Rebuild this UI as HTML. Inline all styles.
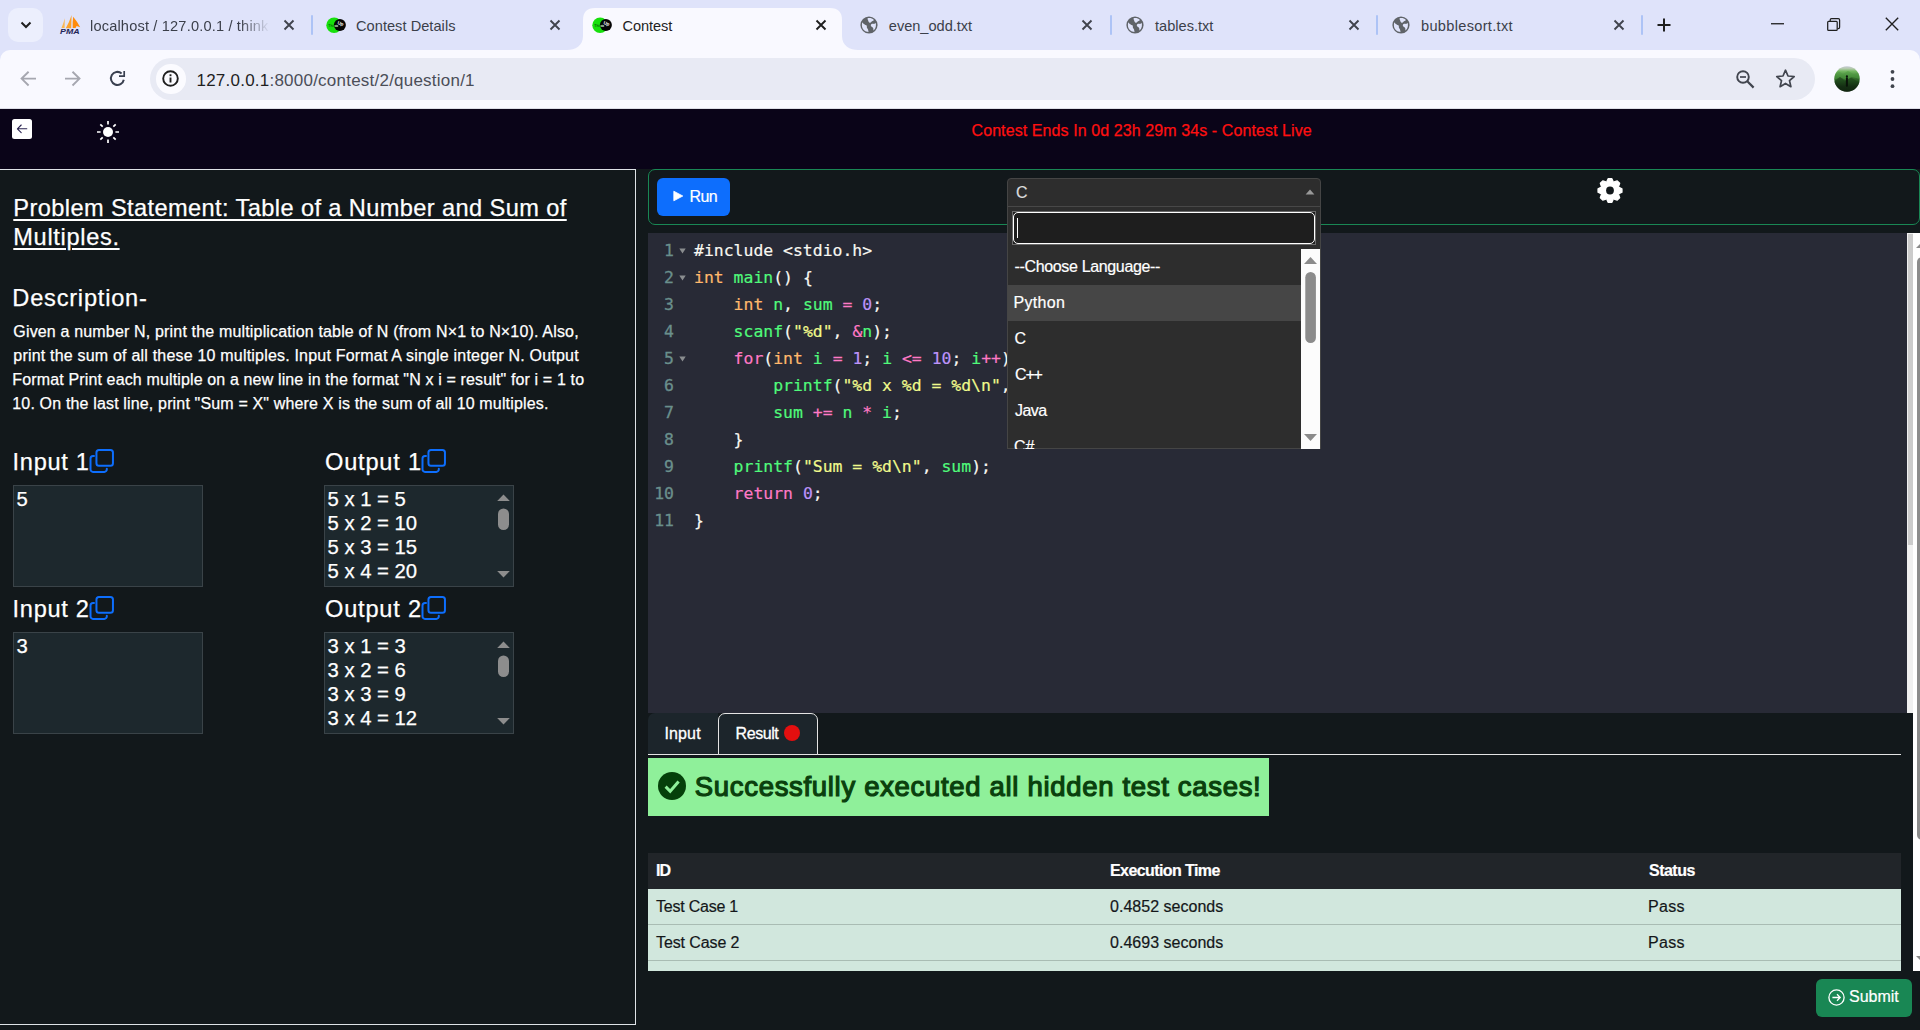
<!DOCTYPE html>
<html lang="en">
<head>
<meta charset="utf-8">
<title>Contest</title>
<style>
*{box-sizing:border-box;margin:0;padding:0}
html,body{width:1920px;height:1030px;overflow:hidden;background:#12181b}
body{position:relative;font-family:"Liberation Sans",sans-serif;color:#fff}
.abs{position:absolute}
.t{position:absolute;white-space:nowrap;line-height:1}
/* ---------- browser chrome ---------- */
#tabstrip{left:0;top:0;width:1920px;height:64px;background:#dfe3fa}
#toolbar{left:0;top:50px;width:1920px;height:58px;background:#f9f9ff;border-radius:10px 10px 0 0}
#tbline{left:0;top:108px;width:1920px;height:1px;background:#dcdde6}
.tabtxt{font-size:14.6px;color:#3b3f4a;top:19px}
.sep{width:2.4px;height:20px;top:14.6px;background:#adc3f6;border-radius:1.2px}
#urlbar{left:150px;top:58px;width:1665px;height:42px;border-radius:21px;background:#e8eaf4}
/* ---------- page ---------- */
#hdr{left:0;top:109px;width:1920px;height:60px;background:#0a0418}
#left{left:0;top:169px;width:636px;height:856px;background:#12181b;border:1px solid #dee2e6;border-left:0}
.nun{font-family:"Liberation Sans",sans-serif;-webkit-text-stroke:0.25px currentColor}
.h{font-size:23.6px;color:#fff}
.ta{background:#1d282d;border:1px solid #3a4348;width:190px;height:102px}
.tatxt{font-size:20.3px;color:#fff}
.p{font-size:16px;color:#fff}
.rob{font-family:"Liberation Sans",sans-serif;-webkit-text-stroke:0.2px currentColor}
.opt{font-size:16px;color:#fff}
.th{font-size:16px;font-weight:700;color:#fff}
.td{font-size:16px;color:#14171a}
.cd{font-family:"DejaVu Sans Mono","Liberation Mono",monospace;font-size:16.44px;line-height:21px;white-space:pre;color:#f8f8f2;-webkit-text-stroke:0.18px currentColor}
.ln{font-family:"DejaVu Sans Mono","Liberation Mono",monospace;font-size:16.44px;line-height:21px;color:#6a8f8c;-webkit-text-stroke:0.3px currentColor}
</style>
</head>
<body>
<!-- ================= BROWSER CHROME ================= -->
<div class="abs" id="tabstrip"></div>
<!-- tab search button -->
<div class="abs" style="left:8px;top:8px;width:35px;height:34px;border-radius:10px;background:#eceffd"></div>
<svg class="abs" style="left:19px;top:19px" width="14" height="12" viewBox="0 0 14 12"><path d="M2.5 3.5 L7 8 L11.5 3.5" fill="none" stroke="#1f1f1f" stroke-width="2"/></svg>
<!-- active tab shape -->
<svg class="abs" style="left:567px;top:8px" width="292" height="42" viewBox="0 0 292 42"><path d="M0 42 C8 42 16 38 16 28 V12 C16 4 20 0 28 0 H263 C271 0 275 4 275 12 V28 C275 38 283 42 291 42 Z" fill="#f9f9ff"/></svg>
<div class="abs" id="toolbar"></div>
<div class="abs" id="tbline"></div>
<div class="abs" id="urlbar"></div>
<!-- tab 1 : phpMyAdmin -->
<svg class="abs" style="left:59px;top:14px" width="23" height="22" viewBox="0 0 23 22">
<path d="M5.8 4.2 L5.6 13.9 L2.5 13.9 Q4.6 9 5.8 4.2 Z" fill="#fbb755"/><path d="M12.6 1 L12.2 14.2 L6.8 14.2 Q10.4 8 12.6 1 Z" fill="#fba22e"/><path d="M14.2 2.8 Q18 7.4 21.2 13.2 L17.6 12 L16.6 14.1 L13.7 13.9 Q13.4 8 14.2 2.8 Z" fill="#ff8c0c"/>
<text x="1.1" y="20.1" font-family="Liberation Sans, sans-serif" font-size="7.7" font-weight="700" font-style="italic" fill="#1f2558" textLength="19.6" lengthAdjust="spacingAndGlyphs">PMA</text></svg>
<div class="t tabtxt" id="tt1" style="left:90px;width:180px;overflow:hidden;-webkit-mask-image:linear-gradient(90deg,#000 150px,transparent 180px);mask-image:linear-gradient(90deg,#000 150px,transparent 180px);letter-spacing:0.17px">localhost / 127.0.0.1 / think</div>
<svg class="abs x" style="left:283px;top:19px" width="12" height="12" viewBox="0 0 12 12"><path d="M1.5 1.5 L10.5 10.5 M10.5 1.5 L1.5 10.5" stroke="#40434d" stroke-width="1.9" fill="none"/></svg>
<div class="abs sep" style="left:311px"></div>
<!-- tab 2 : Contest Details -->
<svg class="abs" style="left:326px;top:15px" width="21" height="20" viewBox="0 0 21 20"><circle cx="8.1" cy="10.2" r="7.8" fill="#17e00c"/><circle cx="13.9" cy="9.9" r="6" fill="#050505"/><text x="2.2" y="11.6" font-family="Liberation Sans, sans-serif" font-size="3.6" font-weight="700" fill="#0b6a08">Think</text><text x="11.6" y="9.6" font-family="Liberation Sans, sans-serif" font-size="4.6" font-weight="700" fill="#fff" transform="rotate(18 13 8)">Up</text><path d="M8.6 11 H12.2" stroke="#fff" stroke-width="1" fill="none"/></svg>
<div class="t tabtxt" id="tt2" style="left:356.0px;letter-spacing:0.036px">Contest Details</div>
<svg class="abs x" style="left:549px;top:19px" width="12" height="12" viewBox="0 0 12 12"><path d="M1.5 1.5 L10.5 10.5 M10.5 1.5 L1.5 10.5" stroke="#40434d" stroke-width="1.9" fill="none"/></svg>
<!-- tab 3 : Contest (active) -->
<svg class="abs" style="left:592px;top:15px" width="21" height="20" viewBox="0 0 21 20"><circle cx="8.1" cy="10.2" r="7.8" fill="#17e00c"/><circle cx="13.9" cy="9.9" r="6" fill="#050505"/><text x="2.2" y="11.6" font-family="Liberation Sans, sans-serif" font-size="3.6" font-weight="700" fill="#0b6a08">Think</text><text x="11.6" y="9.6" font-family="Liberation Sans, sans-serif" font-size="4.6" font-weight="700" fill="#fff" transform="rotate(18 13 8)">Up</text><path d="M8.6 11 H12.2" stroke="#fff" stroke-width="1" fill="none"/></svg>
<div class="t tabtxt" id="tt3" style="left:622.5px;color:#1f1f1f;letter-spacing:-0.083px">Contest</div>
<svg class="abs x" style="left:815px;top:19px" width="12" height="12" viewBox="0 0 12 12"><path d="M1.5 1.5 L10.5 10.5 M10.5 1.5 L1.5 10.5" stroke="#1f1f1f" stroke-width="1.9" fill="none"/></svg>
<!-- tab 4 -->
<svg class="abs globe" style="left:860px;top:16px" width="18" height="18" viewBox="0 0 18 18"><circle cx="9" cy="9" r="8.6" fill="#5f6368"/><path d="M2.2 6.2 C3.5 8.2 5.2 8.8 6.4 9.3 C7.4 10.4 6.3 11.6 7.4 12.6 C8.4 13.4 8.1 14.8 8.6 15.9 C5.2 15.9 1.9 13.2 1.9 9.2 C1.9 8.1 2 7.1 2.2 6.2 Z M7.6 2.2 C9.6 1.7 12.4 2.2 13.9 3.9 C13.2 5.1 11.7 4.8 11.2 6 C10.6 7.4 8.6 6.6 8.4 5.2 C8.3 4.2 7.3 3.4 7.6 2.2 Z M15.6 6.8 C16.4 9 16 12.4 13.6 14.4 C13.1 13.4 13.7 12.2 12.8 11.4 C11.8 10.6 10.6 10.4 10.8 9 C11 7.6 13.2 7.4 14 8 C14.7 8 15.1 7.3 15.6 6.8 Z" fill="#dfe3fa"/></svg>
<div class="t tabtxt" id="tt4" style="left:888.8px;letter-spacing:-0.023px">even_odd.txt</div>
<svg class="abs x" style="left:1081px;top:19px" width="12" height="12" viewBox="0 0 12 12"><path d="M1.5 1.5 L10.5 10.5 M10.5 1.5 L1.5 10.5" stroke="#40434d" stroke-width="1.9" fill="none"/></svg>
<div class="abs sep" style="left:1110px"></div>
<!-- tab 5 -->
<svg class="abs globe" style="left:1126px;top:16px" width="18" height="18" viewBox="0 0 18 18"><circle cx="9" cy="9" r="8.6" fill="#5f6368"/><path d="M2.2 6.2 C3.5 8.2 5.2 8.8 6.4 9.3 C7.4 10.4 6.3 11.6 7.4 12.6 C8.4 13.4 8.1 14.8 8.6 15.9 C5.2 15.9 1.9 13.2 1.9 9.2 C1.9 8.1 2 7.1 2.2 6.2 Z M7.6 2.2 C9.6 1.7 12.4 2.2 13.9 3.9 C13.2 5.1 11.7 4.8 11.2 6 C10.6 7.4 8.6 6.6 8.4 5.2 C8.3 4.2 7.3 3.4 7.6 2.2 Z M15.6 6.8 C16.4 9 16 12.4 13.6 14.4 C13.1 13.4 13.7 12.2 12.8 11.4 C11.8 10.6 10.6 10.4 10.8 9 C11 7.6 13.2 7.4 14 8 C14.7 8 15.1 7.3 15.6 6.8 Z" fill="#dfe3fa"/></svg>
<div class="t tabtxt" id="tt5" style="left:1155.0px;letter-spacing:0.000px">tables.txt</div>
<svg class="abs x" style="left:1348px;top:19px" width="12" height="12" viewBox="0 0 12 12"><path d="M1.5 1.5 L10.5 10.5 M10.5 1.5 L1.5 10.5" stroke="#40434d" stroke-width="1.9" fill="none"/></svg>
<div class="abs sep" style="left:1376px"></div>
<!-- tab 6 -->
<svg class="abs globe" style="left:1392px;top:16px" width="18" height="18" viewBox="0 0 18 18"><circle cx="9" cy="9" r="8.6" fill="#5f6368"/><path d="M2.2 6.2 C3.5 8.2 5.2 8.8 6.4 9.3 C7.4 10.4 6.3 11.6 7.4 12.6 C8.4 13.4 8.1 14.8 8.6 15.9 C5.2 15.9 1.9 13.2 1.9 9.2 C1.9 8.1 2 7.1 2.2 6.2 Z M7.6 2.2 C9.6 1.7 12.4 2.2 13.9 3.9 C13.2 5.1 11.7 4.8 11.2 6 C10.6 7.4 8.6 6.6 8.4 5.2 C8.3 4.2 7.3 3.4 7.6 2.2 Z M15.6 6.8 C16.4 9 16 12.4 13.6 14.4 C13.1 13.4 13.7 12.2 12.8 11.4 C11.8 10.6 10.6 10.4 10.8 9 C11 7.6 13.2 7.4 14 8 C14.7 8 15.1 7.3 15.6 6.8 Z" fill="#dfe3fa"/></svg>
<div class="t tabtxt" id="tt6" style="left:1421.0px;letter-spacing:0.308px">bubblesort.txt</div>
<svg class="abs x" style="left:1613px;top:19px" width="12" height="12" viewBox="0 0 12 12"><path d="M1.5 1.5 L10.5 10.5 M10.5 1.5 L1.5 10.5" stroke="#40434d" stroke-width="1.9" fill="none"/></svg>
<div class="abs sep" style="left:1641px"></div>
<!-- new tab + -->
<svg class="abs" style="left:1657px;top:18px" width="14" height="14" viewBox="0 0 14 14"><path d="M7 0.5 V13.5 M0.5 7 H13.5" stroke="#1f1f1f" stroke-width="2" fill="none"/></svg>
<!-- window controls -->
<svg class="abs" style="left:1771px;top:22.6px" width="13" height="2" viewBox="0 0 13 2"><rect width="13" height="1.3" y="0.1" fill="#1f1f1f"/></svg>
<svg class="abs" style="left:1826px;top:17px" width="16" height="16" viewBox="0 0 16 16"><rect x="1.7" y="4.3" width="9.5" height="9.1" rx="0.9" fill="none" stroke="#1f1f1f" stroke-width="1.25"/><path d="M4.2 4 V3 C4.2 2.2 4.7 1.7 5.5 1.7 H12.3 C13.1 1.7 13.6 2.2 13.6 3 V10.3 C13.6 11.1 13.1 11.6 12.3 11.6 H11.6" fill="none" stroke="#1f1f1f" stroke-width="1.25"/></svg>
<svg class="abs" style="left:1884.5px;top:17.1px" width="14" height="14" viewBox="0 0 14 14"><path d="M0.8 0.8 L13.2 13.2 M13.2 0.8 L0.8 13.2" stroke="#1f1f1f" stroke-width="1.35" fill="none"/></svg>
<!-- toolbar: nav buttons -->
<svg class="abs" style="left:18.7px;top:69.8px" width="19" height="18" viewBox="0 0 19 18"><path d="M9.6 1.7 L2.6 8.6 L9.6 15.5 M2.9 8.6 H17" stroke="#a6a7b0" stroke-width="1.9" fill="none"/></svg>
<svg class="abs" style="left:62.7px;top:69.8px" width="19" height="18" viewBox="0 0 19 18"><path d="M9.5 1.7 L16.5 8.6 L9.5 15.5 M16.2 8.6 H2" stroke="#a6a7b0" stroke-width="1.9" fill="none"/></svg>
<svg class="abs" style="left:109px;top:70px" width="18" height="18" viewBox="0 0 18 18"><path d="M12.6 3.4 A6.5 6.5 0 1 0 14.8 9.7" stroke="#3a4050" stroke-width="2" fill="none"/><path d="M15.2 0.9 V6.1 H10" stroke="#3a4050" stroke-width="1.7" fill="none"/></svg>
<!-- site info -->
<div class="abs" style="left:156.3px;top:64px;width:29.5px;height:29.5px;border-radius:50%;background:#fbfbff"></div>
<svg class="abs" style="left:161.1px;top:69.1px" width="19" height="19" viewBox="0 0 19 19"><circle cx="9.5" cy="9.5" r="7.3" fill="none" stroke="#1f1f1f" stroke-width="1.9"/><rect x="8.55" y="8.5" width="1.9" height="5" fill="#1f1f1f"/><rect x="8.55" y="5.3" width="1.9" height="1.9" fill="#1f1f1f"/></svg>
<div class="t" id="url" style="left:196.5px;top:72px;font-size:17px;color:#4b4e58;letter-spacing:0.228px"><span style="color:#1f1f1f">127.0.0.1</span>:8000/contest/2/question/1</div>
<!-- zoom, star -->
<svg class="abs" style="left:1735px;top:69px" width="21" height="21" viewBox="0 0 21 21"><circle cx="8" cy="8" r="5.8" fill="none" stroke="#41454e" stroke-width="1.9"/><path d="M12.3 12.3 L18.6 18.6" stroke="#41454e" stroke-width="2.2"/><path d="M5 8 H11" stroke="#41454e" stroke-width="1.7"/></svg>
<svg class="abs" style="left:1775px;top:68px" width="21" height="21" viewBox="0 0 21 21"><path d="M10.5 2.2 L13 8 L19.2 8.5 L14.5 12.6 L15.9 18.7 L10.5 15.4 L5.1 18.7 L6.5 12.6 L1.8 8.5 L8 8 Z" fill="none" stroke="#41454e" stroke-width="1.7" stroke-linejoin="round"/></svg>
<!-- avatar -->
<svg class="abs" style="left:1834.4px;top:65.5px" width="26" height="26" viewBox="0 0 26 26"><defs><clipPath id="avc"><circle cx="13" cy="13" r="12.7"/></clipPath><linearGradient id="avg" x1="0" y1="0" x2="0" y2="1"><stop offset="0" stop-color="#c9ccd9"/><stop offset="0.1" stop-color="#b4c9ad"/><stop offset="0.2" stop-color="#74b862"/><stop offset="0.4" stop-color="#3f8034"/><stop offset="0.6" stop-color="#21501d"/><stop offset="0.8" stop-color="#0b170b"/><stop offset="1" stop-color="#040704"/></linearGradient></defs><g clip-path="url(#avc)"><rect width="26" height="26" fill="url(#avg)"/><path d="M0 9 L5 5.5 L9 8 L14 5 L20 8.5 L26 6 V13 L18 11 L12 14 L6 11 L0 14 Z" fill="#4f9a41" opacity="0.55"/><path d="M0 16 L6 11 L11 15 L17 11.5 L26 17 V26 H0 Z" fill="#1c3f19" opacity="0.55"/><rect x="11.9" y="11.2" width="2" height="9.5" rx="0.8" fill="#0a120a"/><circle cx="12.9" cy="10.4" r="1.1" fill="#0a120a"/></g></svg>
<!-- menu dots -->
<svg class="abs" style="left:1890px;top:68.5px" width="5" height="20" viewBox="0 0 5 20"><circle cx="2.5" cy="2.8" r="1.9" fill="#41454e"/><circle cx="2.5" cy="10" r="1.9" fill="#41454e"/><circle cx="2.5" cy="17.2" r="1.9" fill="#41454e"/></svg>

<!-- ================= PAGE ================= -->
<div class="abs" id="hdr"></div>
<!-- back button -->
<div class="abs" style="left:12px;top:119px;width:20px;height:20px;border-radius:2.5px;background:#fff"></div>
<svg class="abs" style="left:16px;top:123px" width="12" height="12" viewBox="0 0 12 12"><path d="M5.2 2 L1.4 5.8 L5.2 9.6 M1.6 5.8 H10.8" stroke="#2a2350" stroke-width="1.1" fill="none" stroke-linecap="round" stroke-linejoin="round"/></svg>
<!-- sun -->
<svg class="abs" style="left:96px;top:120px" width="24" height="24" viewBox="-12 -12 24 24"><circle r="5" fill="#fff"/><g stroke="#fff" stroke-width="1.7" stroke-linecap="butt"><path d="M0 -7.4 V-11 M0 7.4 V11 M-7.4 0 H-11 M7.4 0 H11 M5.3 -5.3 L7.7 -7.7 M-5.3 -5.3 L-7.7 -7.7 M5.3 5.3 L7.7 7.7 M-5.3 5.3 L-7.7 7.7"/></g></svg>
<div class="t nun" id="timer" style="left:971.5px;top:123px;font-size:16px;color:#ff1010;letter-spacing:0.091px">Contest Ends In 0d 23h 29m 34s - Contest Live</div>

<!-- LEFT PANEL -->
<div class="abs" id="left"></div>
<div class="t nun h" id="ti1" style="left:13.3px;top:197px;text-decoration:underline;text-decoration-thickness:2px;text-underline-offset:3px;letter-spacing:0.400px">Problem Statement: Table of a Number and Sum of</div>
<div class="t nun h" id="ti2" style="left:13.3px;top:226px;text-decoration:underline;text-decoration-thickness:2px;text-underline-offset:3px;letter-spacing:0.667px">Multiples.</div>
<div class="t nun h" id="desc" style="left:12.3px;top:287px;letter-spacing:0.791px">Description-</div>
<div class="t nun p" id="p1" style="left:13.3px;top:324.3px;letter-spacing:0.167px">Given a number N, print the multiplication table of N (from N×1 to N×10). Also,</div>
<div class="t nun p" id="p2" style="left:13.3px;top:348.3px;letter-spacing:0.199px">print the sum of all these 10 multiples. Input Format A single integer N. Output</div>
<div class="t nun p" id="p3" style="left:12.3px;top:372.3px;letter-spacing:0.141px">Format Print each multiple on a new line in the format "N x i = result" for i = 1 to</div>
<div class="t nun p" id="p4" style="left:12.3px;top:396.3px;letter-spacing:0.158px">10. On the last line, print "Sum = X" where X is the sum of all 10 multiples.</div>

<div class="t nun h" id="in1" style="left:12.6px;top:451px;letter-spacing:0.7px">Input 1</div>
<svg class="abs cp" style="left:89px;top:448px" width="26" height="26" viewBox="0 0 26 26"><g fill="none" stroke="#0d6efd" stroke-width="2" stroke-linecap="round"><rect x="7.45" y="2.05" width="16.5" height="15.8" rx="2.5"/><path d="M5 8.1 H4 A2.5 2.5 0 0 0 1.5 10.6 V21.4 A2.5 2.5 0 0 0 4 23.9 H15.3 A2.5 2.5 0 0 0 17.8 21.4 V20.8"/></g></svg>
<div class="abs ta" style="left:13px;top:485px"></div>
<div class="t nun tatxt" style="left:16.5px;top:489px">5</div>

<div class="t nun h" id="out1" style="left:325.0px;top:451px;letter-spacing:0.8px">Output 1</div>
<svg class="abs cp" style="left:420.8px;top:448px" width="26" height="26" viewBox="0 0 26 26"><g fill="none" stroke="#0d6efd" stroke-width="2" stroke-linecap="round"><rect x="7.45" y="2.05" width="16.5" height="15.8" rx="2.5"/><path d="M5 8.1 H4 A2.5 2.5 0 0 0 1.5 10.6 V21.4 A2.5 2.5 0 0 0 4 23.9 H15.3 A2.5 2.5 0 0 0 17.8 21.4 V20.8"/></g></svg>
<div class="abs ta" style="left:324px;top:485px"></div>
<div class="t nun tatxt o" style="left:327.5px;top:489px">5 x 1 = 5</div>
<div class="t nun tatxt o" style="left:327.5px;top:513px">5 x 2 = 10</div>
<div class="t nun tatxt o" style="left:327.5px;top:537px">5 x 3 = 15</div>
<div class="t nun tatxt o" style="left:327.5px;top:561px">5 x 4 = 20</div>
<svg class="abs" style="left:497px;top:493px" width="13" height="88" viewBox="0 0 13 88"><path d="M0.2 8 L6.5 1.5 L12.8 8 Z" fill="#8d8d8d"/><rect x="1" y="15.5" width="11" height="21.5" rx="5.5" fill="#8d8d8d"/><path d="M0.2 78 L6.5 84.5 L12.8 78 Z" fill="#8d8d8d"/></svg>

<div class="t nun h" id="in2" style="left:12.6px;top:598px;letter-spacing:0.7px">Input 2</div>
<svg class="abs cp" style="left:89px;top:595px" width="26" height="26" viewBox="0 0 26 26"><g fill="none" stroke="#0d6efd" stroke-width="2" stroke-linecap="round"><rect x="7.45" y="2.05" width="16.5" height="15.8" rx="2.5"/><path d="M5 8.1 H4 A2.5 2.5 0 0 0 1.5 10.6 V21.4 A2.5 2.5 0 0 0 4 23.9 H15.3 A2.5 2.5 0 0 0 17.8 21.4 V20.8"/></g></svg>
<div class="abs ta" style="left:13px;top:632px"></div>
<div class="t nun tatxt" style="left:16.5px;top:636px">3</div>

<div class="t nun h" id="out2" style="left:325.0px;top:598px;letter-spacing:0.8px">Output 2</div>
<svg class="abs cp" style="left:420.8px;top:595px" width="26" height="26" viewBox="0 0 26 26"><g fill="none" stroke="#0d6efd" stroke-width="2" stroke-linecap="round"><rect x="7.45" y="2.05" width="16.5" height="15.8" rx="2.5"/><path d="M5 8.1 H4 A2.5 2.5 0 0 0 1.5 10.6 V21.4 A2.5 2.5 0 0 0 4 23.9 H15.3 A2.5 2.5 0 0 0 17.8 21.4 V20.8"/></g></svg>
<div class="abs ta" style="left:324px;top:632px"></div>
<div class="t nun tatxt o" style="left:327.5px;top:636px">3 x 1 = 3</div>
<div class="t nun tatxt o" style="left:327.5px;top:660px">3 x 2 = 6</div>
<div class="t nun tatxt o" style="left:327.5px;top:684px">3 x 3 = 9</div>
<div class="t nun tatxt o" style="left:327.5px;top:708px">3 x 4 = 12</div>
<svg class="abs" style="left:497px;top:640px" width="13" height="88" viewBox="0 0 13 88"><path d="M0.2 8 L6.5 1.5 L12.8 8 Z" fill="#8d8d8d"/><rect x="1" y="15.5" width="11" height="21.5" rx="5.5" fill="#8d8d8d"/><path d="M0.2 78 L6.5 84.5 L12.8 78 Z" fill="#8d8d8d"/></svg>

<!-- RIGHT PANEL -->
<!-- toolbar box -->
<div class="abs" style="left:648px;top:169px;width:1272px;height:56px;border:1px solid #198754;border-radius:7px;background:#12181b"></div>
<div class="abs" style="left:657px;top:178px;width:73px;height:38px;border-radius:6px;background:#0d6efd"></div>
<svg class="abs" style="left:673px;top:190px" width="11" height="12" viewBox="0 0 11 12"><path d="M0.8 1.2 L9.8 6 L0.8 10.8 Z" fill="#fff" stroke="#fff" stroke-width="0.8" stroke-linejoin="round"/></svg>
<div class="t rob" id="run" style="left:689.5px;top:189px;font-size:16px;color:#fff;letter-spacing:-0.650px">Run</div>
<!-- gear -->
<svg class="abs" style="left:1596px;top:176.9px" width="28" height="27" viewBox="-14 -13.5 28 27"><g fill="#fff" stroke="#fff" stroke-width="1.4" stroke-linejoin="round"><circle r="9.6" stroke="none"/><g id="gt"><path d="M-3.1 -9 L-1.7 -11.9 H1.7 L3.1 -9 Z"/><path d="M-3.1 9 L-1.7 11.9 H1.7 L3.1 9 Z"/></g><use href="#gt" transform="rotate(45)"/><use href="#gt" transform="rotate(90)"/><use href="#gt" transform="rotate(135)"/></g><circle r="3.9" fill="#12181b"/></svg>

<!-- editor -->
<div class="abs" style="left:648px;top:233px;width:1259px;height:480px;background:#282a36"></div>
<div class="t ln" style="left:648px;top:239.5px;width:26px;text-align:right">1</div>
<svg class="abs" style="left:678.5px;top:248px" width="7" height="6" viewBox="0 0 7 6"><path d="M0.3 0.5 H6.7 L3.5 5.5 Z" fill="#8a8d8f"/></svg>
<div class="t cd" id="c1" style="left:694px;top:239.5px"><span style="color:#f8f8f2">#include &lt;stdio.h&gt;</span></div>
<div class="t ln" style="left:648px;top:266.5px;width:26px;text-align:right">2</div>
<svg class="abs" style="left:678.5px;top:275px" width="7" height="6" viewBox="0 0 7 6"><path d="M0.3 0.5 H6.7 L3.5 5.5 Z" fill="#8a8d8f"/></svg>
<div class="t cd" id="c2" style="left:694px;top:266.5px"><span style="color:#ffb86c">int</span><span style="color:#f8f8f2"> </span><span style="color:#50fa7b">main</span><span style="color:#f8f8f2">() {</span></div>
<div class="t ln" style="left:648px;top:293.5px;width:26px;text-align:right">3</div>
<div class="t cd" id="c3" style="left:694px;top:293.5px"><span style="color:#f8f8f2">    </span><span style="color:#ffb86c">int</span><span style="color:#f8f8f2"> </span><span style="color:#50fa7b">n</span><span style="color:#f8f8f2">, </span><span style="color:#50fa7b">sum</span><span style="color:#f8f8f2"> </span><span style="color:#ff79c6">=</span><span style="color:#f8f8f2"> </span><span style="color:#bd93f9">0</span><span style="color:#f8f8f2">;</span></div>
<div class="t ln" style="left:648px;top:320.5px;width:26px;text-align:right">4</div>
<div class="t cd" id="c4" style="left:694px;top:320.5px"><span style="color:#f8f8f2">    </span><span style="color:#50fa7b">scanf</span><span style="color:#f8f8f2">(</span><span style="color:#f1fa8c">"%d"</span><span style="color:#f8f8f2">, </span><span style="color:#ff79c6">&amp;</span><span style="color:#50fa7b">n</span><span style="color:#f8f8f2">);</span></div>
<div class="t ln" style="left:648px;top:347.5px;width:26px;text-align:right">5</div>
<svg class="abs" style="left:678.5px;top:356px" width="7" height="6" viewBox="0 0 7 6"><path d="M0.3 0.5 H6.7 L3.5 5.5 Z" fill="#8a8d8f"/></svg>
<div class="t cd" id="c5" style="left:694px;top:347.5px"><span style="color:#f8f8f2">    </span><span style="color:#ff79c6">for</span><span style="color:#f8f8f2">(</span><span style="color:#ffb86c">int</span><span style="color:#f8f8f2"> </span><span style="color:#50fa7b">i</span><span style="color:#f8f8f2"> </span><span style="color:#ff79c6">=</span><span style="color:#f8f8f2"> </span><span style="color:#bd93f9">1</span><span style="color:#f8f8f2">; </span><span style="color:#50fa7b">i</span><span style="color:#f8f8f2"> </span><span style="color:#ff79c6">&lt;=</span><span style="color:#f8f8f2"> </span><span style="color:#bd93f9">10</span><span style="color:#f8f8f2">; </span><span style="color:#50fa7b">i</span><span style="color:#ff79c6">++</span><span style="color:#f8f8f2">) {</span></div>
<div class="t ln" style="left:648px;top:374.5px;width:26px;text-align:right">6</div>
<div class="t cd" id="c6" style="left:694px;top:374.5px"><span style="color:#f8f8f2">        </span><span style="color:#50fa7b">printf</span><span style="color:#f8f8f2">(</span><span style="color:#f1fa8c">"%d x %d = %d\n"</span><span style="color:#f8f8f2">, </span><span style="color:#50fa7b">n</span><span style="color:#f8f8f2">, </span><span style="color:#50fa7b">i</span><span style="color:#f8f8f2">, </span><span style="color:#50fa7b">n</span><span style="color:#f8f8f2"> </span><span style="color:#ff79c6">*</span><span style="color:#f8f8f2"> </span><span style="color:#50fa7b">i</span><span style="color:#f8f8f2">);</span></div>
<div class="t ln" style="left:648px;top:401.5px;width:26px;text-align:right">7</div>
<div class="t cd" id="c7" style="left:694px;top:401.5px"><span style="color:#f8f8f2">        </span><span style="color:#50fa7b">sum</span><span style="color:#f8f8f2"> </span><span style="color:#ff79c6">+=</span><span style="color:#f8f8f2"> </span><span style="color:#50fa7b">n</span><span style="color:#f8f8f2"> </span><span style="color:#ff79c6">*</span><span style="color:#f8f8f2"> </span><span style="color:#50fa7b">i</span><span style="color:#f8f8f2">;</span></div>
<div class="t ln" style="left:648px;top:428.5px;width:26px;text-align:right">8</div>
<div class="t cd" id="c8" style="left:694px;top:428.5px"><span style="color:#f8f8f2">    }</span></div>
<div class="t ln" style="left:648px;top:455.5px;width:26px;text-align:right">9</div>
<div class="t cd" id="c9" style="left:694px;top:455.5px"><span style="color:#f8f8f2">    </span><span style="color:#50fa7b">printf</span><span style="color:#f8f8f2">(</span><span style="color:#f1fa8c">"Sum = %d\n"</span><span style="color:#f8f8f2">, </span><span style="color:#50fa7b">sum</span><span style="color:#f8f8f2">);</span></div>
<div class="t ln" style="left:648px;top:482.5px;width:26px;text-align:right">10</div>
<div class="t cd" id="c10" style="left:694px;top:482.5px"><span style="color:#f8f8f2">    </span><span style="color:#ff79c6">return</span><span style="color:#f8f8f2"> </span><span style="color:#bd93f9">0</span><span style="color:#f8f8f2">;</span></div>
<div class="t ln" style="left:648px;top:509.5px;width:26px;text-align:right">11</div>
<div class="t cd" id="c11" style="left:694px;top:509.5px"><span style="color:#f8f8f2">}</span></div>

<!-- editor scrollbars -->
<div class="abs" style="left:1907px;top:233px;width:13px;height:738px;background:#fff"></div>
<div class="abs" style="left:1907px;top:233px;width:6px;height:480px;background:#f0f0f0"></div>
<div class="abs" style="left:1908px;top:234px;width:5px;height:311px;background:#cbcbcb"></div>
<div class="abs" style="left:1901px;top:713px;width:12px;height:258px;background:#12181b"></div>
<svg class="abs" style="left:1913px;top:233px" width="7" height="738" viewBox="0 0 7 738"><path d="M3 15 L7 11 V15 Z" fill="#8b8b8b"/><rect x="4" y="24" width="12" height="583" rx="5" fill="#8b8b8b"/><path d="M3 723 H7 V727 Z" fill="#8b8b8b"/></svg>

<!-- select2 -->
<div class="abs" style="left:1007px;top:178px;width:314px;height:29px;background:#2d2d2d;border:1px solid #454545;border-radius:4px 4px 0 0"></div>
<div class="t rob" id="selc" style="left:1016px;top:185px;font-size:16px;color:#dcdcdc;">C</div>
<svg class="abs" style="left:1305px;top:189.3px" width="10" height="6" viewBox="0 0 10 6"><path d="M0.6 5.4 L5 0.6 L9.4 5.4 Z" fill="#999"/></svg>
<div class="abs" style="left:1007px;top:206px;width:314px;height:243px;background:#2d2d2d;border:1px solid #454545;border-top:0"></div>
<div class="abs" style="left:1008px;top:206px;width:312px;height:1px;background:#484848"></div>
<div class="abs" style="left:1012px;top:211px;width:304px;height:34px;border:1px solid #6a6a6a;background:#1e1e1e"></div>
<div class="abs" style="left:1013px;top:212px;width:302px;height:32px;border:1.8px solid #fff;border-radius:5px;background:#1e1e1e"></div>
<div class="abs" style="left:1017px;top:218px;width:1px;height:20px;background:#fff"></div>
<div class="abs" style="left:1008px;top:285px;width:293px;height:36px;background:#464646"></div>
<div class="t rob opt" id="o0" style="left:1014.5px;top:259px;letter-spacing:-0.344px">--Choose Language--</div>
<div class="t rob opt" id="o1" style="left:1013.5px;top:295px;letter-spacing:0.320px">Python</div>
<div class="t rob opt" id="o2" style="left:1014.5px;top:331px;">C</div>
<div class="t rob opt" id="o3" style="left:1015.0px;top:367px;letter-spacing:-1.150px">C++</div>
<div class="t rob opt" id="o4" style="left:1015.0px;top:403px;letter-spacing:-0.567px">Java</div>
<div class="abs" style="left:1008px;top:429px;width:293px;height:20px;overflow:hidden"><div class="t rob opt" id="o5" style="left:6px;top:10px">C#</div></div>
<div class="abs" style="left:1301px;top:249px;width:19px;height:200px;background:#fcfcfc"></div>
<svg class="abs" style="left:1301px;top:249px" width="19" height="200" viewBox="0 0 19 200"><path d="M3 15 L9.5 8 L16 15 Z" fill="#8b8b8b"/><rect x="4.3" y="23" width="10.6" height="71" rx="5.3" fill="#8b8b8b"/><path d="M3 185 L9.5 192 L16 185 Z" fill="#8b8b8b"/></svg>

<!-- tabs -->
<div class="abs" style="left:648px;top:713px;width:70px;height:41px;background:#1c252b;border-radius:7px 0 0 0"></div>
<div class="abs" style="left:648px;top:754px;width:1253px;height:1px;background:#e4e4e4"></div>
<div class="abs" style="left:718px;top:713px;width:100px;height:42px;background:#1c252b;border:1px solid #e4e4e4;border-radius:7px 7px 0 0"></div>
<div class="t rob" id="tin" style="left:664.5px;top:726px;font-size:16px;color:#fff;-webkit-text-stroke:0.3px #fff;letter-spacing:0.125px">Input</div>
<div class="t rob" id="tres" style="left:735.6px;top:726px;font-size:16px;color:#fff;-webkit-text-stroke:0.3px #fff;letter-spacing:-0.440px">Result</div>
<div class="abs" style="left:784px;top:725px;width:16px;height:16px;border-radius:50%;background:#e40f0f"></div>

<!-- alert -->
<div class="abs" style="left:648px;top:758px;width:621px;height:58px;background:#8ff09a"></div>
<svg class="abs" style="left:658px;top:772px" width="28" height="28" viewBox="0 0 28 28"><circle cx="14" cy="14" r="14" fill="#05400a"/><path d="M7.6 14.6 L12.2 19.2 L20.6 9.4" fill="none" stroke="#8ff09a" stroke-width="3"/></svg>
<div class="t nun" id="succ" style="left:694.8px;top:772.5px;font-size:27.5px;font-weight:400;-webkit-text-stroke:1.2px #0a400d;color:#0a400d;letter-spacing:0.683px">Successfully executed all hidden test cases!</div>

<!-- table -->
<div class="abs" style="left:648px;top:853px;width:1253px;height:36px;background:#212529"></div>
<div class="abs" style="left:648px;top:889px;width:1253px;height:82px;background:#d1e7dd"></div>
<div class="abs" style="left:648px;top:924px;width:1253px;height:1px;background:#a9bcb3"></div>
<div class="abs" style="left:648px;top:960px;width:1253px;height:1px;background:#a9bcb3"></div>
<div class="t rob th" id="th1" style="left:656.0px;top:863px;letter-spacing:-1.000px">ID</div>
<div class="t rob th" id="th2" style="left:1110.0px;top:863px;letter-spacing:-0.585px">Execution Time</div>
<div class="t rob th" id="th3" style="left:1649.0px;top:863px;letter-spacing:-0.520px">Status</div>
<div class="t rob td" id="td11" style="left:656.0px;top:899px;letter-spacing:-0.230px">Test Case 1</div>
<div class="t rob td" id="td12" style="left:1110.0px;top:899px;letter-spacing:0.023px">0.4852 seconds</div>
<div class="t rob td" id="td13" style="left:1648.0px;top:899px;letter-spacing:0.333px">Pass</div>
<div class="t rob td" id="td21" style="left:656.0px;top:935px;letter-spacing:-0.100px">Test Case 2</div>
<div class="t rob td" id="td22" style="left:1110.0px;top:935px;letter-spacing:0.023px">0.4693 seconds</div>
<div class="t rob td" id="td23" style="left:1648.0px;top:935px;letter-spacing:0.333px">Pass</div>

<!-- submit -->
<div class="abs" style="left:1816px;top:979px;width:96px;height:38px;border-radius:6px;background:#198754"></div>
<svg class="abs" style="left:1828px;top:989px" width="17" height="17" viewBox="0 0 17 17"><circle cx="8.5" cy="8.5" r="7.6" fill="none" stroke="#fff" stroke-width="1.3"/><path d="M4.4 8.5 H12 M9 5.3 L12.2 8.5 L9 11.7" fill="none" stroke="#fff" stroke-width="1.3"/></svg>
<div class="t rob" id="sub" style="left:1849.0px;top:989px;font-size:16px;color:#fff;letter-spacing:0.000px">Submit</div>


</body>
</html>
